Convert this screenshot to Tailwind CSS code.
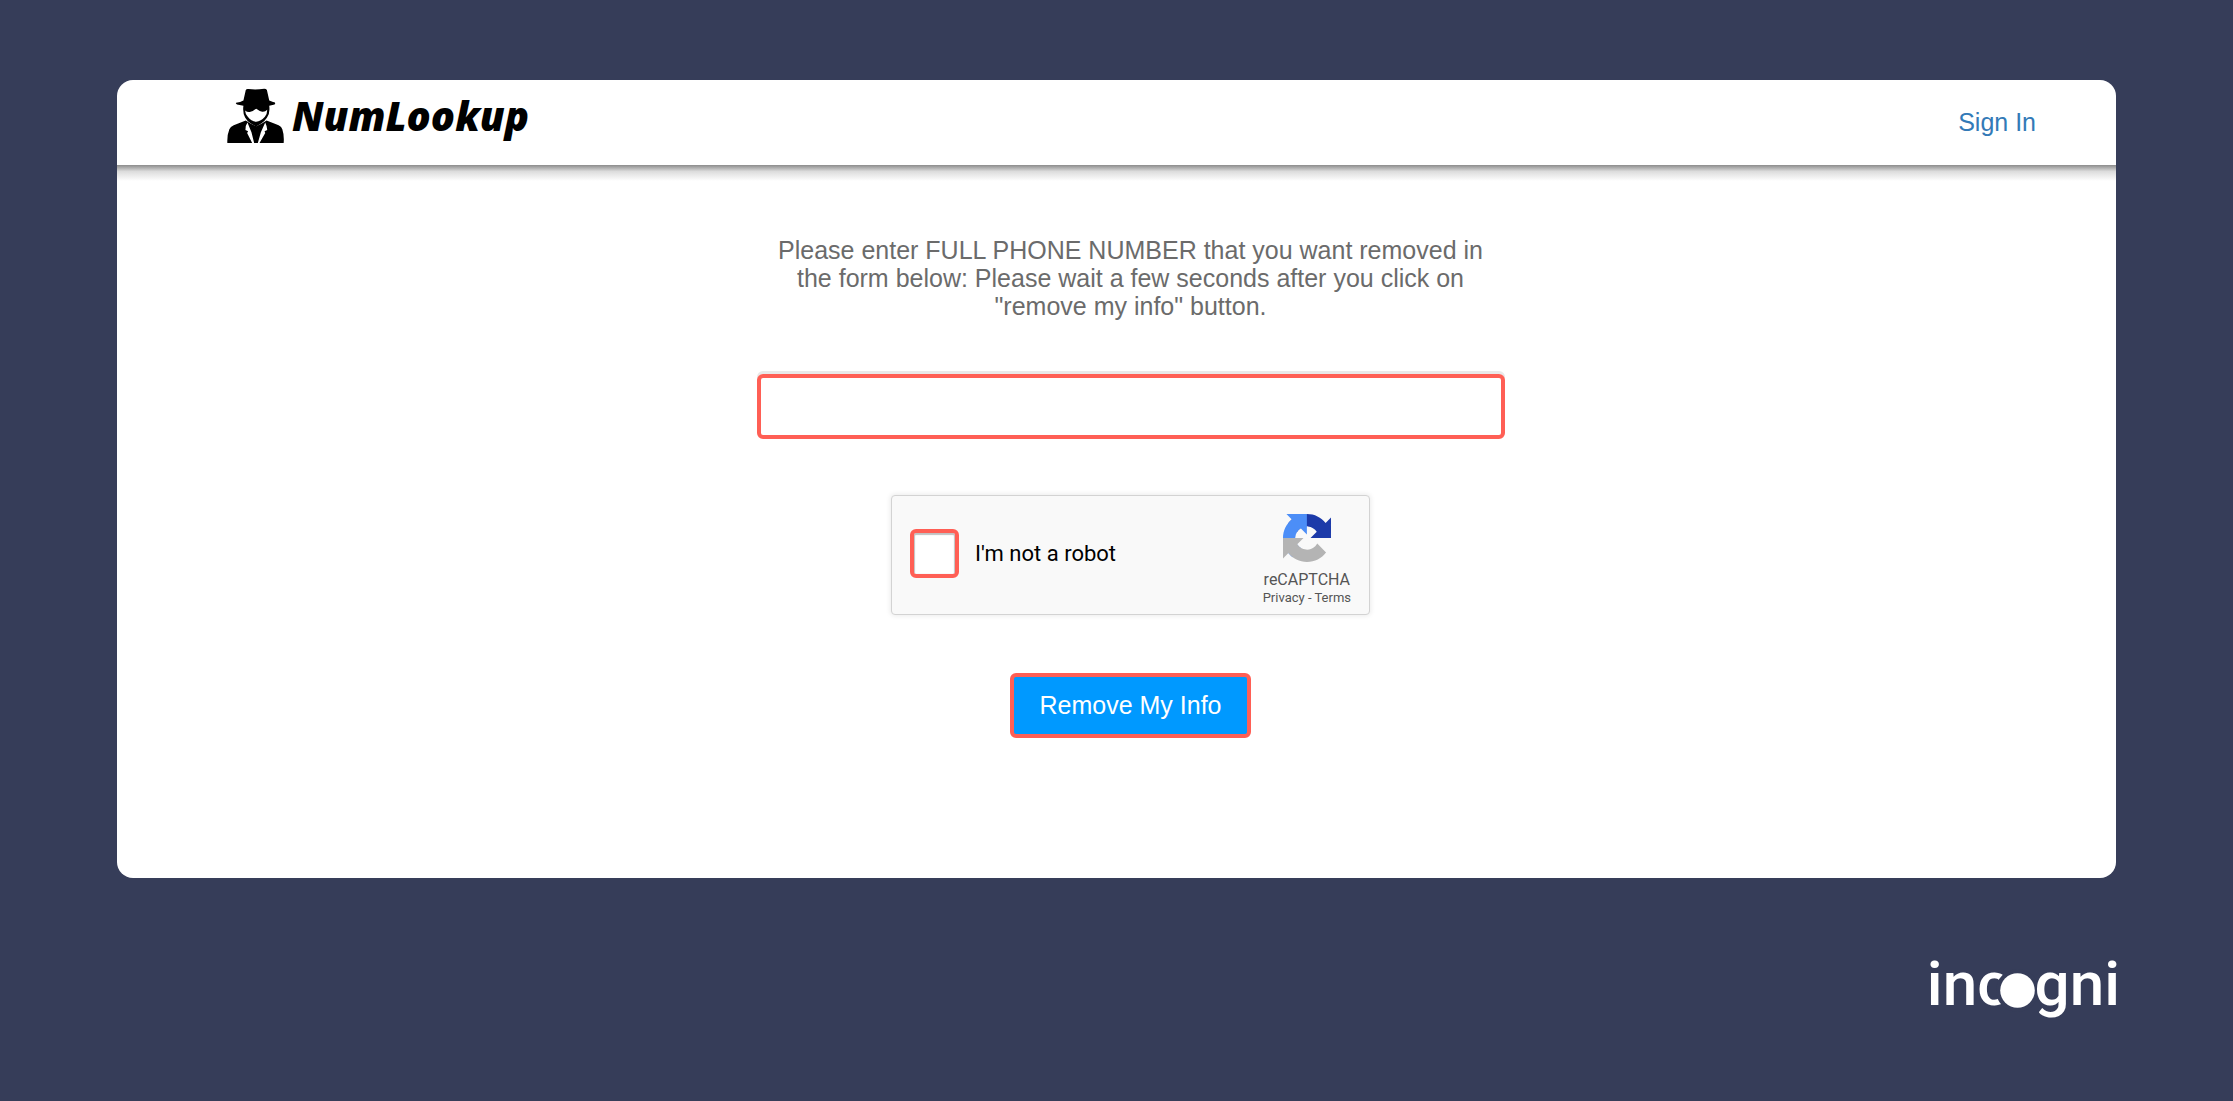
<!DOCTYPE html>
<html lang="en">
<head>
    <meta charset="UTF-8">
    <meta name="viewport" content="width=device-width, initial-scale=1.0">
    <title>NumLookup - Remove My Info</title>
    <script src="https://cdn.jsdelivr.net/npm/@tailwindcss/browser@4"></script>
</head>
<body class="min-h-screen bg-[#363d59] px-6 lg:px-[117px] pt-20 pb-20 font-['Liberation_Sans',Arial,sans-serif]">

    <!-- Page card -->
    <div class="bg-white rounded-2xl overflow-hidden">

        <!-- Header -->
        <header class="flex items-center justify-between h-[85px] pl-[110px] pr-20">
            <a href="#" class="flex items-center gap-2 pb-3.5 text-black">
                <svg class="w-[57px] h-[55px]" viewBox="36 24 170 164" aria-hidden="true">
                    <path d="M92 30Q94 26 100 27Q123 30 147 26Q153 26 155 30L162 61Q172 66 179 67Q181 70 178 73L162 77Q165 100 155 113Q147 125 139 129L123 139L106 129Q96 123 90 112Q82 97 85 77L66 73Q61 71 63 68Q76 66 85 61Z"/>
                    <path fill="#fff" d="M90 91Q97 97 106 95Q114 94 118 89L123 86L128 89Q133 94 141 95Q150 96 156 89Q156 101 149 110Q137 124 123 125Q108 123 98 110Q90 100 90 91Z"/>
                    <path d="M37 188Q36 164 43 147Q46 139 56 135L92 121L106 130L123 138L140 130L154 121L190 135Q199 139 201 147Q207 165 205 188Z"/>
                    <path fill="#fff" d="M97 127L92 137L91 149L99 153L96 158L111 188H117L109 156ZM150 127L154 137L156 149L148 153L150 158L133 188H128L137 156Z"/>
                </svg>
                <span class="text-[40px] leading-[48px] font-extrabold italic font-['Open_Sans',sans-serif]">NumLookup</span>
            </a>
            <a href="#" class="text-[25px] text-[#337ab7]">Sign In</a>
        </header>
        <div class="h-4 bg-linear-to-b from-[#8c8c8c] via-[#dcdcdc] via-40% to-white"></div>

        <!-- Removal form -->
        <form class="flex flex-col items-center pl-7 pt-[55px] pb-[140px]">
            <label for="phone" class="block max-w-[748px] px-4 text-center text-[25px] leading-7 text-[#6b6b6b]">
                Please enter FULL PHONE NUMBER that you want removed in the form below: Please wait a few seconds after you click on "remove my info" button.
            </label>
            <input type="tel" id="phone" class="mt-[54px] w-full max-w-[748px] h-[65px] px-4 text-[25px] border-4 border-[#ff5f55] rounded-md shadow-[0_-3px_0_#e9e9e9] outline-none">

            <!-- reCAPTCHA box -->
            <div class="mt-14 flex items-center justify-between w-full max-w-[479px] h-[120px] px-[18px] bg-[#f9f9f9] border border-[#d3d3d3] rounded shadow-[0_0_5px_1px_rgba(0,0,0,0.08)] font-['Roboto',sans-serif]">
                <div class="flex items-center gap-4 pb-1">
                    <input type="checkbox" id="robot" class="appearance-none w-[49px] h-[49px] bg-white border-4 border-[#ff5f55] rounded-md shadow-[inset_0_1px_1px_1px_#c1c1c1] checked:bg-[#4285f4]">
                    <label for="robot" class="text-[22px] text-black">I'm not a robot</label>
                </div>
                <div class="flex flex-col items-center pt-2.5 text-[#555]">
                    <svg class="w-12 h-12" viewBox="0 0 64 64" aria-hidden="true">
                        <path fill="#1c3aa9" d="M64 31.955l-.033-1.37V4.687l-7.16 7.16C50.948 4.674 42.033.093 32.05.093c-10.4 0-19.622 4.96-25.458 12.64l11.736 11.86a15.55 15.55 0 0 1 4.754-5.334c2.05-1.6 4.952-2.906 8.968-2.906.485 0 .86.057 1.135.163 4.976.393 9.288 3.14 11.828 7.124l-8.307 8.307L64 31.953"/>
                        <path fill="#4c8ef7" d="M31.862.094l-1.37.033H4.594l7.16 7.16C4.58 13.147 0 22.06 0 32.046c0 10.4 4.96 19.622 12.64 25.458L24.5 45.768a15.55 15.55 0 0 1-5.334-4.754c-1.6-2.05-2.906-4.952-2.906-8.968 0-.485.057-.86.163-1.135.393-4.976 3.14-9.288 7.124-11.828l8.307 8.307L31.86.095"/>
                        <path fill="#b4b4b4" d="M.001 32.045l.033 1.37v25.898l7.16-7.16c5.86 7.173 14.774 11.754 24.76 11.754 10.4 0 19.622-4.96 25.458-12.64l-11.736-11.86a15.55 15.55 0 0 1-4.754 5.334c-2.05 1.6-4.952 2.906-8.968 2.906-.485 0-.86-.057-1.135-.163-4.976-.393-9.288-3.14-11.828-7.124l8.307-8.307c-10.522.04-22.4.066-27.295-.005"/>
                    </svg>
                    <span class="mt-2 text-base leading-5">reCAPTCHA</span>
                    <span class="text-[13px] leading-4"><a href="#">Privacy</a> - <a href="#">Terms</a></span>
                </div>
            </div>

            <button type="button" class="mt-[58px] h-[65px] px-[25px] text-[25px] text-white bg-[#0099ff] border-4 border-[#ff5f55] rounded-md cursor-pointer">Remove My Info</button>
        </form>
    </div>

    <!-- Brand -->
    <footer class="flex justify-end pt-[70px]">
        <div class="flex items-center -mr-1 text-white text-[62px] leading-[72px] font-medium font-['Roboto',sans-serif]">
            <span>inc</span>
            <svg class="w-[43px] h-[43px] mt-3 -ml-3.5 -mr-1" viewBox="0 0 43 43" role="img" aria-label="o">
                <circle cx="21.5" cy="21.5" r="21.5" fill="#363d59"/>
                <circle cx="21.5" cy="21.5" r="17.3" fill="currentColor"/>
            </svg>
            <span>gni</span>
        </div>
    </footer>

</body>
</html>
